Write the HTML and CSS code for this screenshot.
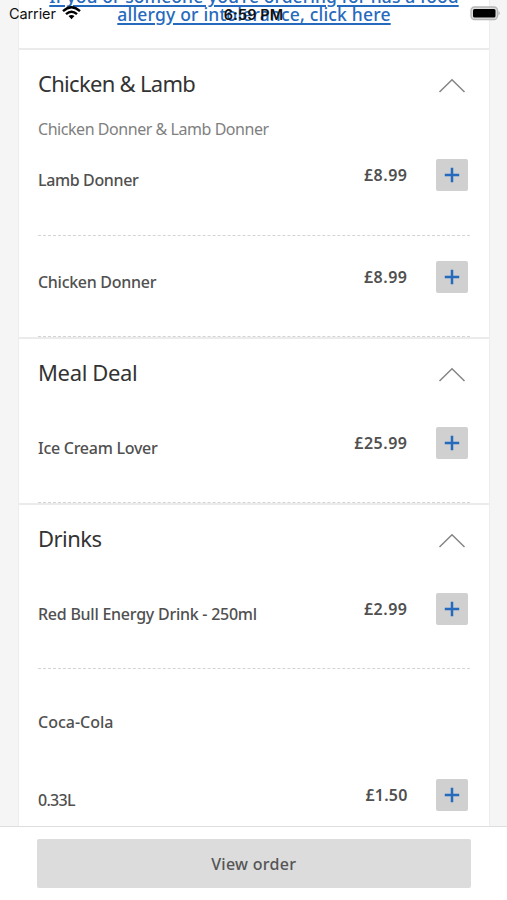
FILE: index.html
```html
<!DOCTYPE html>
<html lang="en">
<head>
<meta charset="utf-8">
<meta name="viewport" content="width=device-width">
<title>Menu</title>
<link rel="stylesheet" href="styles.css">
</head>
<body>
<svg class="defs" width="0" height="0" aria-hidden="true">
  <symbol id="chevron" viewBox="0 0 28 16"><path d="M1.500 14 14 1.700 26.500 14" fill="none" stroke="#858585" stroke-width="1.500"/></symbol>
  <symbol id="plus" viewBox="0 0 16 16"><path d="M8 .8v14.400M.8 8h14.400" fill="none" stroke="#266abd" stroke-width="2.500"/></symbol>
</svg>
<div class="screen">
  <header class="status">
    <span class="carrier">Carrier</span>
    <svg class="wifi" viewBox="0 0 19 14"><g fill="none" stroke="#000" stroke-width="2.400"><path d="M1 5.200Q9.500-2.600 18 5.200"/><path d="M4 8.200Q9.500 3.200 15 8.200"/></g><path d="M6.500 10.100Q9.500 7.800 12.500 10.100L9.500 13.200Z"/></svg>
    <span class="time">6:59 PM</span>
    <svg class="battery" viewBox="0 0 31 15"><rect x="1" y="1" width="26.500" height="12.500" rx="3.500" fill="#ddd" stroke="#b5b5b5" stroke-width="1.300"/><rect x="3" y="3" width="22.500" height="8.500" rx="1.500"/><path d="M28.500 5q2.500 2.200 0 4.500z" fill="#aaa"/></svg>
  </header>
  <main class="menu">
    <div class="notice"><a class="first" href="#">If you or someone you’re ordering for has a food</a><a class="second" href="#">allergy or intolerance, click here</a></div>
    <section>
      <div class="head"><h2 class="t-chicken">Chicken &amp; Lamb</h2><svg class="chevron"><use href="#chevron"/></svg></div>
      <p class="description">Chicken Donner &amp; Lamb Donner</p>
      <div class="item"><span class="name n-lamb">Lamb Donner</span><span class="price">£8.99</span><button aria-label="Add"><svg><use href="#plus"/></svg></button></div>
      <div class="item"><span class="name n-chicken">Chicken Donner</span><span class="price">£8.99</span><button aria-label="Add"><svg><use href="#plus"/></svg></button></div>
    </section>
    <section>
      <div class="head"><h2 class="t-meal">Meal Deal</h2><svg class="chevron"><use href="#chevron"/></svg></div>
      <div class="item"><span class="name n-ice">Ice Cream Lover</span><span class="price">£25.99</span><button aria-label="Add"><svg><use href="#plus"/></svg></button></div>
    </section>
    <section>
      <div class="head"><h2 class="t-drinks">Drinks</h2><svg class="chevron"><use href="#chevron"/></svg></div>
      <div class="item"><span class="name n-bull">Red Bull Energy Drink - 250ml</span><span class="price">£2.99</span><button aria-label="Add"><svg><use href="#plus"/></svg></button></div>
      <h3 class="name n-coca">Coca-Cola</h3>
      <div class="item variant"><span class="name n-size">0.33L</span><span class="price p-size">£1.50</span><button aria-label="Add"><svg><use href="#plus"/></svg></button></div>
    </section>
  </main>
  <footer><button class="order">View order</button></footer>
</div>
</body>
</html>
```
FILE: styles.css
```css
* { box-sizing: border-box; }
body { margin: 0; font-family: "Noto Sans", "Open Sans", sans-serif; }
h2, h3, p { margin: 0; }
button { border: 0; padding: 0; font-family: inherit; }
svg { display: block; flex: none; }
.defs { position: absolute; }
.screen { position: relative; width: 507px; height: 900px; overflow: hidden; background: #f5f5f5; display: flex; flex-direction: column; }
.status { position: absolute; inset: 0 0 auto; height: 27px; z-index: 2; display: flex; align-items: center; padding: 0 6px 0 9px; font: 14.500px/27px Inter, sans-serif; color: #111; }
.carrier { width: 47px; letter-spacing: -.1px; white-space: nowrap; }
.wifi { width: 19px; height: 14px; margin: -1px 0 0 6px; }
.time { position: absolute; left: 0; right: 0; padding-top: 1px; text-align: center; font-weight: 600; letter-spacing: .1px; }
.battery { width: 31px; height: 15px; margin-left: auto; }
.menu { height: 826px; margin: 0 17px 0 18px; overflow: hidden; background: #fff; border: solid #ededed; border-width: 0 1px; }
.notice { display: flex; flex-direction: column; align-items: center; margin-top: -13px; height: 61px; }
.notice a { color: #266abd; font-size: 17.500px; font-weight: 500; line-height: 18px; text-decoration-thickness: 1.500px; text-underline-offset: 2px; white-space: nowrap; }
.notice .first { letter-spacing: .08px; }
.notice .second { letter-spacing: .19px; }
section { border-top: 2px solid #ebebeb; padding: 0 19px; }
.head { height: 64px; display: flex; align-items: center; justify-content: space-between; padding: 4px 4px 0 0; }
h2 { margin-top: -3px; font-size: 22px; line-height: 30px; font-weight: 400; color: #333; white-space: nowrap; }
.t-chicken { letter-spacing: -.7px; }
.t-meal { letter-spacing: -.35px; }
.t-drinks { letter-spacing: -.55px; }
.chevron { width: 28px; height: 16px; margin-top: 4px; }
.description { height: 21px; font-size: 16px; line-height: 30px; color: #808080; font-weight: 400; letter-spacing: -.45px; white-space: nowrap; }
.item { height: 101px; display: flex; align-items: flex-start; padding: 24.400px 2.500px 0 0; border-bottom: 1px dashed #d4d4d4; }
.item + .item { padding-top: 25px; }
.head + .item { height: 100px; padding-top: 24px; }
.name { font-size: 16px; line-height: 30px; font-weight: 500; color: #505050; white-space: nowrap; }
.item .name { margin-top: 6px; }
.n-lamb { letter-spacing: -.37px; }
.n-chicken { letter-spacing: -.29px; }
.n-ice { letter-spacing: -.27px; }
.n-bull { letter-spacing: -.25px; }
.item .n-size { letter-spacing: -.7px; }
.price { margin: 1px 28px 0 auto; font-size: 16px; line-height: 30px; font-weight: 600; color: #505050; letter-spacing: .5px; }
.p-size { letter-spacing: .2px; }
.item button { width: 32px; height: 32px; border-radius: 2px; background: #d0d0d0; display: grid; place-items: center; flex: none; }
.item button svg { width: 16px; height: 16px; }
h3.name { margin-top: 38px; }
.item.variant { padding-top: 42px; }
footer { height: 74px; border-top: 1px solid #dedede; background: #fff; padding: 12px 36.500px 0 37px; }
.order { display: block; width: 100%; height: 49px; border-radius: 2px; background: #dcdcdc; color: #555; font-size: 16px; font-weight: 500; letter-spacing: .3px; }
```
